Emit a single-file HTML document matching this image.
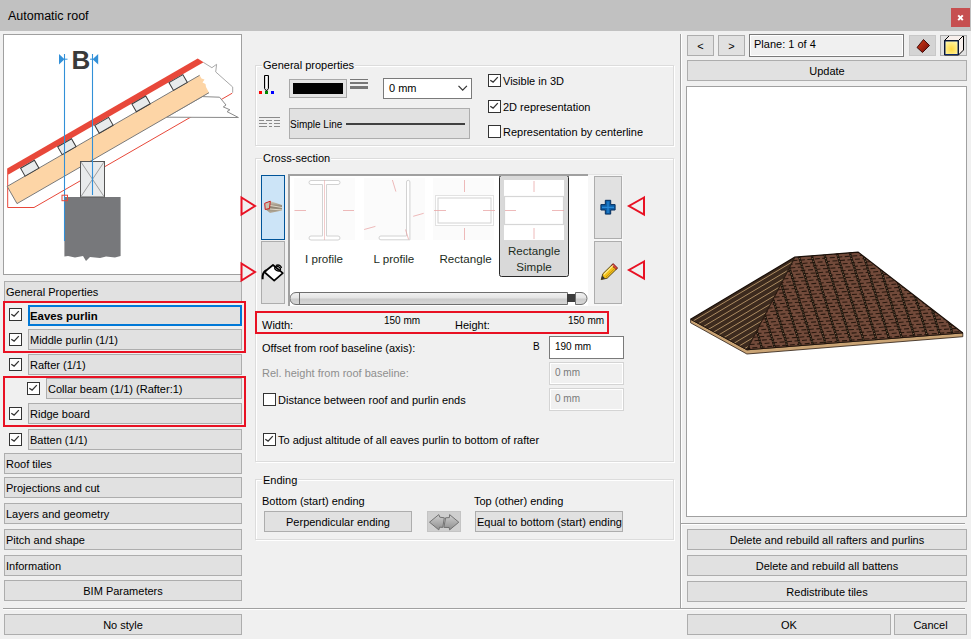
<!DOCTYPE html>
<html><head><meta charset="utf-8">
<style>
*{box-sizing:border-box;margin:0;padding:0}
html,body{width:971px;height:639px;overflow:hidden;background:#f0f0f0;font-family:"Liberation Sans",sans-serif;font-size:11px;color:#000;position:relative}
.a{position:absolute}
.btn{position:absolute;background:#e1e1e1;border:1px solid #adadad;white-space:nowrap;overflow:hidden}
.l{position:absolute;white-space:nowrap;line-height:14px}
.cb{position:absolute;width:13px;height:13px;border:1px solid #333;background:#fff}
.cb svg{position:absolute;left:0;top:0}
.gb{position:absolute;border:1px solid #dcdcdc;box-shadow:inset 1px 1px 0 #fff,1px 1px 0 #fff}
.gt{position:absolute;background:#f0f0f0;padding:0 1px;line-height:14px;white-space:nowrap}
.red{position:absolute;border:2px solid #e81123}
.ct{text-align:center}
.hl{position:absolute;height:1px;background:#a0a0a0}
</style></head><body>
<!-- title bar -->
<div class="a" style="left:0;top:0;width:971px;height:31px;background:#c1c1c1"></div>
<div class="l" style="left:8px;top:9px;font-size:12.5px">Automatic roof</div>
<div class="a" style="left:951px;top:8px;width:19px;height:19px;background:#c64f50"></div>
<svg class="a" style="left:951px;top:8px" width="19" height="19"><path d="M7.2 7.4L11.8 12.1M11.8 7.4L7.2 12.1" stroke="#fff" stroke-width="2"/></svg>

<!-- LEFT PANEL -->
<div class="a" style="left:3px;top:34px;width:239px;height:241px;background:#fff;border:1px solid #a0a0a0"></div>
<div id="preview"><svg class="a" style="left:4px;top:35px" width="237" height="239" viewBox="4 35 237 239">
<polyline points="7.7,175.0 7.7,207.5 34.0,207.5 232.2,93.2" fill="none" stroke="#e8483a" stroke-width="1"/>
<polygon points="166.5,117.2 202.4,96.6 219.5,97.2 226.0,105.0 223.3,106.9 229.9,109.8 227.0,111.6 238.4,117.5" fill="#fff" stroke="#8a8a8a" stroke-width="1"/>
<polyline points="203.4,62.4 211.9,67.7 216.6,64.3 215.7,71.9 232.7,87.0 232.7,92.7" fill="none" stroke="#a8a8a8" stroke-width="1"/>
<polygon points="7.2,168.6 197.7,58.6 203.6,62.3 7.2,175.2" fill="#e8483a"/>
<polygon points="7.2,186.4 199.6,75.3 201.5,78.5 204.5,79.5 202.5,82.5 205.5,84.0 206.0,87.0 209.0,92.7 17.0,203.6" fill="#fdd5a6"/>
<line x1="7.2" y1="186.4" x2="199.6" y2="75.3" stroke="#7a7a7a" stroke-width="1"/>
<line x1="17" y1="203.6" x2="209" y2="92.7" stroke="#7a7a7a" stroke-width="1"/>
<line x1="7.2" y1="186.4" x2="17" y2="203.6" stroke="#7a7a7a" stroke-width="1"/>
<g transform="translate(32.0,172.1) rotate(-30)"><rect x="-8" y="-9" width="16" height="9" fill="#e8ebec" stroke="#3c3c3c" stroke-width="1"/></g>
<g transform="translate(69.1,150.6) rotate(-30)"><rect x="-8" y="-9" width="16" height="9" fill="#e8ebec" stroke="#3c3c3c" stroke-width="1"/></g>
<g transform="translate(106.2,129.2) rotate(-30)"><rect x="-8" y="-9" width="16" height="9" fill="#e8ebec" stroke="#3c3c3c" stroke-width="1"/></g>
<g transform="translate(143.3,107.8) rotate(-30)"><rect x="-8" y="-9" width="16" height="9" fill="#e8ebec" stroke="#3c3c3c" stroke-width="1"/></g>
<g transform="translate(180.4,86.4) rotate(-30)"><rect x="-8" y="-9" width="16" height="9" fill="#e8ebec" stroke="#3c3c3c" stroke-width="1"/></g>
<polygon points="64.4,197.0 120.6,197.0 120.6,256.0 115.0,257.5 106.0,256.5 100.0,258.0 90.0,257.0 86.0,261.0 83.0,256.0 75.0,257.5 68.0,256.0 64.4,256.5" fill="#77787b"/>
<rect x="80.5" y="161.5" width="24" height="35.5" fill="#e9ebec" stroke="#555" stroke-width="1"/>
<path d="M81 162L104 196.5M104 162L81 196.5" stroke="#8a8a8a" stroke-width="0.8"/>
<line x1="64.5" y1="54" x2="64.5" y2="241" stroke="#3290d8" stroke-width="1.1"/>
<line x1="92.5" y1="54" x2="92.5" y2="195" stroke="#3290d8" stroke-width="1.1"/>
<polygon points="59,54 59,64.5 64.5,59.2" fill="#3290d8"/><line x1="64" y1="59.2" x2="67.5" y2="59.2" stroke="#3290d8" stroke-width="1"/>
<polygon points="98.2,54 98.2,64.5 92.6,59.2" fill="#3290d8"/><line x1="90" y1="59.2" x2="93" y2="59.2" stroke="#3290d8" stroke-width="1"/>
<text x="71.5" y="69" font-family="Liberation Sans" font-weight="bold" font-size="26" fill="#3a3a3a">B</text>
<rect x="62" y="195.2" width="5.5" height="5.5" fill="none" stroke="#e8483a" stroke-width="1"/>
</svg></div>

<div class="btn" style="left:4px;top:281px;width:238px;height:22px;border-bottom:none"></div>
<div class="l" style="left:6px;top:285px">General Properties</div>

<div class="btn" style="left:28px;top:305px;width:214px;height:21px;border:2px solid #0078d7"></div>
<div class="l" style="left:30px;top:309px;font-weight:bold;font-size:11.4px">Eaves purlin</div>
<div class="btn" style="left:28px;top:329px;width:214px;height:21px"></div>
<div class="l" style="left:30px;top:333px">Middle purlin (1/1)</div>
<div class="btn" style="left:28px;top:354px;width:214px;height:21px"></div>
<div class="l" style="left:30px;top:358px">Rafter (1/1)</div>
<div class="btn" style="left:46px;top:378px;width:196px;height:21px"></div>
<div class="l" style="left:48px;top:382px">Collar beam (1/1) (Rafter:1)</div>
<div class="btn" style="left:28px;top:403px;width:214px;height:21px"></div>
<div class="l" style="left:30px;top:407px">Ridge board</div>
<div class="btn" style="left:28px;top:429px;width:214px;height:21px"></div>
<div class="l" style="left:30px;top:433px">Batten (1/1)</div>

<div class="cb" style="left:9px;top:308px"><svg width="10" height="10"><path d="M1.3 5.2L4.1 7.1L8.8 2.1" fill="none" stroke="#333" stroke-width="1.3"/></svg></div>
<div class="cb" style="left:9px;top:333px"><svg width="10" height="10"><path d="M1.3 5.2L4.1 7.1L8.8 2.1" fill="none" stroke="#333" stroke-width="1.3"/></svg></div>
<div class="cb" style="left:9px;top:358px"><svg width="10" height="10"><path d="M1.3 5.2L4.1 7.1L8.8 2.1" fill="none" stroke="#333" stroke-width="1.3"/></svg></div>
<div class="cb" style="left:27px;top:382px"><svg width="10" height="10"><path d="M1.3 5.2L4.1 7.1L8.8 2.1" fill="none" stroke="#333" stroke-width="1.3"/></svg></div>
<div class="cb" style="left:9px;top:407px"><svg width="10" height="10"><path d="M1.3 5.2L4.1 7.1L8.8 2.1" fill="none" stroke="#333" stroke-width="1.3"/></svg></div>
<div class="cb" style="left:9px;top:433px"><svg width="10" height="10"><path d="M1.3 5.2L4.1 7.1L8.8 2.1" fill="none" stroke="#333" stroke-width="1.3"/></svg></div>
<div class="red" style="left:3px;top:301px;width:243px;height:52px"></div>
<div class="red" style="left:3px;top:376px;width:243px;height:51px"></div>

<div class="btn" style="left:4px;top:453px;width:238px;height:21px"></div>
<div class="l" style="left:6px;top:457px">Roof tiles</div>
<div class="btn" style="left:4px;top:477px;width:238px;height:21px"></div>
<div class="l" style="left:6px;top:481px">Projections and cut</div>
<div class="btn" style="left:4px;top:503px;width:238px;height:21px"></div>
<div class="l" style="left:6px;top:507px">Layers and geometry</div>
<div class="btn" style="left:4px;top:529px;width:238px;height:21px"></div>
<div class="l" style="left:6px;top:533px">Pitch and shape</div>
<div class="btn" style="left:4px;top:555px;width:238px;height:21px"></div>
<div class="l" style="left:6px;top:559px">Information</div>
<div class="btn ct" style="left:4px;top:580px;width:238px;height:21px;line-height:21px">BIM Parameters</div>

<div class="hl" style="left:3px;top:608px;width:962px"></div><div class="a" style="left:3px;top:609px;width:962px;height:1px;background:#fff"></div>
<div class="btn ct" style="left:4px;top:614px;width:238px;height:21px;line-height:21px">No style</div>

<!-- CENTER -->
<div class="gb" style="left:255px;top:65px;width:419px;height:81px"></div>
<div class="gt" style="left:262px;top:58px">General properties</div>

<div class="gb" style="left:255px;top:158px;width:419px;height:304px"></div>
<div class="gt" style="left:262px;top:151px">Cross-section</div>

<div class="gb" style="left:255px;top:479px;width:419px;height:61px"></div>
<div class="gt" style="left:262px;top:473px">Ending</div>


<!-- general properties content -->
<svg class="a" style="left:258px;top:74px" width="18" height="22">
 <path d="M6.5 1.5h4v13l-2 2.5l-2-2.5z" fill="#d8d8d8" stroke="#000" stroke-width="1"/>
 <path d="M8.5 2v12" stroke="#fff" stroke-width="1"/>
 <rect x="1" y="17" width="3" height="3" fill="#f00"/>
 <rect x="7" y="17" width="3" height="3" fill="#080"/>
 <rect x="13" y="17" width="3" height="3" fill="#00f"/>
</svg>
<div class="a" style="left:289px;top:79px;width:58px;height:19px;border:1px solid #a8a8a8;background:#e3e3e3"></div>
<div class="a" style="left:293px;top:83px;width:50px;height:11px;background:#000"></div>
<svg class="a" style="left:350px;top:78px" width="19" height="12">
 <rect x="0" y="1" width="18" height="1" fill="#777"/>
 <rect x="0" y="4" width="18" height="2" fill="#777"/>
 <rect x="0" y="8" width="18" height="3" fill="#777"/>
</svg>
<div class="a" style="left:383px;top:78px;width:89px;height:21px;border:1px solid #7a7a7a;background:#fff"></div>
<div class="l" style="left:389px;top:81px">0 mm</div>
<svg class="a" style="left:458px;top:85px" width="10" height="7"><path d="M0.5 0.8L4.7 5.2L8.9 0.8" fill="none" stroke="#333" stroke-width="1.2"/></svg>

<svg class="a" style="left:258px;top:116px" width="23" height="12">
 <rect x="1" y="1" width="21" height="1" fill="#8a8a8a"/>
 <rect x="1" y="4" width="5" height="1" fill="#8a8a8a"/><rect x="8" y="4" width="6" height="1" fill="#8a8a8a"/><rect x="16" y="4" width="6" height="1" fill="#8a8a8a"/>
 <rect x="1" y="7" width="8" height="1" fill="#8a8a8a"/><rect x="11" y="7" width="3" height="1" fill="#8a8a8a"/><rect x="16" y="7" width="6" height="1" fill="#8a8a8a"/>
 <rect x="1" y="10" width="8" height="1" fill="#8a8a8a"/><rect x="11" y="10" width="3" height="1" fill="#8a8a8a"/><rect x="16" y="10" width="6" height="1" fill="#8a8a8a"/>
</svg>
<div class="btn" style="left:289px;top:108px;width:181px;height:31px"></div>
<div class="l" style="left:290px;top:118px;font-size:10px">Simple Line</div>
<div class="a" style="left:346px;top:123px;width:119px;height:2px;background:#404040"></div>

<div class="cb" style="left:488px;top:74px"><svg width="10" height="10"><path d="M1.3 5.2L4.1 7.1L8.8 2.1" fill="none" stroke="#333" stroke-width="1.3"/></svg></div>
<div class="l" style="left:503px;top:74px">Visible in 3D</div>
<div class="cb" style="left:488px;top:100px"><svg width="10" height="10"><path d="M1.3 5.2L4.1 7.1L8.8 2.1" fill="none" stroke="#333" stroke-width="1.3"/></svg></div>
<div class="l" style="left:503px;top:100px">2D representation</div>
<div class="cb" style="left:488px;top:125px"></div>
<div class="l" style="left:503px;top:125px">Representation by centerline</div>

<!-- cross-section content -->
<div class="a" style="left:261px;top:175px;width:24px;height:65px;background:#cce4f7;border:1px solid #005499"></div>
<div class="btn" style="left:261px;top:241px;width:24px;height:63px"></div>
<div class="a" style="left:288px;top:174px;width:300px;height:132px;background:#fff;border-top:2px solid #a0a0a0;border-left:2px solid #a0a0a0"></div>
<div class="a" style="left:588px;top:174px;width:35px;height:132px;background:#f7f7f7;border-top:1px solid #e3e3e3"></div>
<div id="gallery"><svg class="a" style="left:290px;top:176px" width="298" height="130" viewBox="290 176 298 130">
<rect x="294" y="178" width="61" height="62" fill="#fbfbfb"/>
<rect x="364" y="178" width="61" height="62" fill="#fbfbfb"/>
<rect x="433" y="178" width="61" height="62" fill="#fbfbfb"/>
<path d="M311 180.5h27a2 2 0 0 1 0 4h-11.5v51.5h11.5a2 2 0 0 1 0 4h-27a2 2 0 0 1 0-4h11.5v-51.5h-11.5a2 2 0 0 1 0-4z" fill="#fff" stroke="#d2d2d2" stroke-width="1"/>
<line x1="324.5" y1="180" x2="324.5" y2="240" stroke="#eaa8a8" stroke-width="0.6"/>
<line x1="294.5" y1="210.5" x2="306" y2="210.5" stroke="#eaa8a8" stroke-width="0.8"/>
<line x1="343" y1="210.5" x2="354" y2="210.5" stroke="#eaa8a8" stroke-width="0.8"/>
<path d="M406.5 182a1.7 1.7 0 0 1 3.4 0v57.8h-29a1.9 1.9 0 0 1 0-3.8h25.6z" fill="#fff" stroke="#d2d2d2" stroke-width="1"/>
<line x1="392.4" y1="180" x2="395.9" y2="191.6" stroke="#eaa8a8" stroke-width="0.8"/>
<line x1="364.1" y1="229.5" x2="375.4" y2="226.4" stroke="#eaa8a8" stroke-width="0.8"/>
<line x1="413.2" y1="216.3" x2="423.7" y2="213.3" stroke="#eaa8a8" stroke-width="0.8"/>
<line x1="405.5" y1="229.5" x2="408.6" y2="239.5" stroke="#eaa8a8" stroke-width="0.8"/>
<rect x="435.5" y="195.5" width="58" height="30" fill="#fff" stroke="#e2e2e2" stroke-width="1"/>
<rect x="438" y="198" width="53" height="25" fill="#fff" stroke="#d2d2d2" stroke-width="1"/>
<line x1="464.5" y1="180" x2="464.5" y2="192" stroke="#eaa8a8" stroke-width="0.8"/>
<line x1="464.5" y1="228" x2="464.5" y2="240" stroke="#eaa8a8" stroke-width="0.8"/>
<line x1="434" y1="210.5" x2="446" y2="210.5" stroke="#eaa8a8" stroke-width="0.8"/>
<line x1="483" y1="210.5" x2="495" y2="210.5" stroke="#eaa8a8" stroke-width="0.8"/>
<rect x="499.5" y="175.5" width="69" height="101" rx="2" fill="#d9d9d9" stroke="#2a2a2a" stroke-width="1"/>
<rect x="504" y="180" width="60" height="60" fill="#fff"/>
<rect x="504.5" y="196.5" width="59" height="28" fill="#fff" stroke="#d6d6d6" stroke-width="1.2"/>
<line x1="534" y1="181" x2="534" y2="192" stroke="#eaa8a8" stroke-width="0.8"/>
<line x1="534" y1="228" x2="534" y2="239" stroke="#eaa8a8" stroke-width="0.8"/>
<line x1="505" y1="210.5" x2="516" y2="210.5" stroke="#eaa8a8" stroke-width="0.8"/>
<line x1="552" y1="210.5" x2="564" y2="210.5" stroke="#eaa8a8" stroke-width="0.8"/>
<text x="305" y="262.5" font-family="Liberation Sans" font-size="11.6" fill="#1c2c1c">I profile</text>
<text x="373.5" y="262.5" font-family="Liberation Sans" font-size="11.6" fill="#1c2c1c">L profile</text>
<text x="439.5" y="262.5" font-family="Liberation Sans" font-size="11.6" fill="#1c2c1c">Rectangle</text>
<text x="534" y="254.5" text-anchor="middle" font-family="Liberation Sans" font-size="11.6" fill="#1c2c1c">Rectangle</text>
<text x="534" y="270.7" text-anchor="middle" font-family="Liberation Sans" font-size="11.6" fill="#1c2c1c">Simple</text>
<defs><linearGradient id="sg" x1="0" y1="0" x2="0" y2="1"><stop offset="0" stop-color="#f2f2f2"/><stop offset="0.45" stop-color="#e4e4e4"/><stop offset="0.55" stop-color="#cbcbcb"/><stop offset="1" stop-color="#d8d8d8"/></linearGradient></defs>
<path d="M296 292.5H567.5V304.5H296a6 6 0 0 1 0-12z" fill="url(#sg)" stroke="#6e6e6e" stroke-width="1"/>
<line x1="299.5" y1="293" x2="299.5" y2="304" stroke="#6e6e6e" stroke-width="1"/>
<rect x="567" y="294" width="8.5" height="8" fill="#3c3c3c"/>
<path d="M575.5 292.5H581a6 6 0 0 1 0 12H575.5z" fill="url(#sg)" stroke="#6e6e6e" stroke-width="1"/>
</svg></div><!--end-gallery-->
<div class="btn" style="left:594px;top:176px;width:28px;height:63px"></div>
<div class="btn" style="left:594px;top:241px;width:28px;height:63px"></div>
<div id="icons"><svg class="a" style="left:262px;top:198px" width="22" height="17" viewBox="262 198 22 17">
<defs><linearGradient id="bm" x1="0" y1="0" x2="0" y2="1"><stop offset="0" stop-color="#d8d0c0"/><stop offset="0.5" stop-color="#8a8070"/><stop offset="1" stop-color="#b8ae9c"/></linearGradient></defs>
<path d="M265 203.5L270 201L282 205L282 210.5L270 213L265 209z" fill="url(#bm)"/>
<path d="M270 205.5L282 207.5M270 209L282 210" stroke="#e8e0d0" stroke-width="0.9"/>
<path d="M264.7 203.3L270.3 201.2L269.5 208.5L265.2 209.5z" fill="#c8c0b0" stroke="#d02020" stroke-width="1"/>
</svg>
<svg class="a" style="left:261px;top:261px" width="24" height="24" viewBox="261 261 24 24">
<path d="M264.3 272L273 265L282.8 273.2L274.2 280.6z" fill="#fff" stroke="#000" stroke-width="1.7" stroke-linejoin="round"/>
<path d="M266.5 270.2Q262.2 272 262.6 279.2" fill="none" stroke="#000" stroke-width="2"/>
<ellipse cx="277.6" cy="268.6" rx="3" ry="2.1" fill="none" stroke="#000" stroke-width="1.3" transform="rotate(30 277.6 268.6)"/>
<path d="M276 265.3Q280.5 264 281.5 268" fill="none" stroke="#000" stroke-width="1.3"/>
</svg>
<svg class="a" style="left:600px;top:199px" width="17" height="16" viewBox="600 199 17 16">
<path d="M605.3 200.3h5.4v4.3h4.4v5.4h-4.4v4.1h-5.4v-4.1h-4.4v-5.4h4.4z" fill="#0d5fa8" stroke="#062f5e" stroke-width="1"/>
<path d="M608 201.5v11.5M602 207.3h12" stroke="#2a8ad8" stroke-width="1.2"/>
</svg>
<svg class="a" style="left:600px;top:262px" width="19" height="19" viewBox="600 262 19 19">
<path d="M601.2 279.6L602.8 273.8L612.6 264.2L617 268.6L607.2 278.2z" fill="#f3c21a" stroke="#4a3a12" stroke-width="0.9" stroke-linejoin="round"/>
<path d="M611.6 265.2L616 269.6L617.6 268L613.2 263.6z" fill="#e0403a" stroke="#6a1a1a" stroke-width="0.8"/>
<path d="M601.2 279.6L602.3 275.6L605.2 278.5z" fill="#333"/>
<path d="M603.8 274.6L613.2 265.4" stroke="#fff09a" stroke-width="1.1"/>
<path d="M606 277L615.4 267.8" stroke="#c89010" stroke-width="1"/>
</svg>
<svg class="a" style="left:238px;top:194px" width="20" height="92" viewBox="238 194 20 92">
<path d="M241.5 197.5L255 206L241.5 214.5z" fill="none" stroke="#e81123" stroke-width="2"/>
<path d="M241.5 263.5L255 272L241.5 280.5z" fill="none" stroke="#e81123" stroke-width="2"/>
</svg>
<svg class="a" style="left:625px;top:194px" width="22" height="92" viewBox="625 194 22 92">
<path d="M644 197.5L629 206L644 214.5z" fill="none" stroke="#e81123" stroke-width="2"/>
<path d="M644 261.5L629 270L644 278.5z" fill="none" stroke="#e81123" stroke-width="2"/>
</svg></div><!--end-icons-->

<div class="red" style="left:255px;top:311px;width:354px;height:23px"></div>
<div class="l" style="left:262px;top:318px">Width:</div>
<div class="l" style="left:384px;top:314px;font-size:10px">150 mm</div>
<div class="l" style="left:455px;top:318px">Height:</div>
<div class="l" style="left:568px;top:314px;font-size:10px">150 mm</div>

<div class="l" style="left:262px;top:341px">Offset from roof baseline (axis):</div>
<div class="l" style="left:533px;top:340px;font-size:10px">B</div>
<div class="a" style="left:549px;top:336px;width:75px;height:23px;border:1px solid #7a7a7a;background:#fff"></div>
<div class="l" style="left:555px;top:340px;font-size:10px">190 mm</div>
<div class="l" style="left:262px;top:366px;color:#8e8e8e">Rel. height from roof baseline:</div>
<div class="a" style="left:549px;top:362px;width:75px;height:23px;border:1px solid #d4d4d4;background:#f0f0f0;box-shadow:inset 1px 1px 0 #fff,inset -1px -1px 0 #fff"></div>
<div class="l" style="left:555px;top:366px;color:#7a7a7a;font-size:10px">0 mm</div>
<div class="cb" style="left:263px;top:393px"></div>
<div class="l" style="left:278px;top:393px">Distance between roof and purlin ends</div>
<div class="a" style="left:549px;top:388px;width:75px;height:23px;border:1px solid #d4d4d4;background:#f0f0f0;box-shadow:inset 1px 1px 0 #fff,inset -1px -1px 0 #fff"></div>
<div class="l" style="left:555px;top:392px;color:#7a7a7a;font-size:10px">0 mm</div>
<div class="cb" style="left:263px;top:433px"><svg width="10" height="10"><path d="M1.3 5.2L4.1 7.1L8.8 2.1" fill="none" stroke="#333" stroke-width="1.3"/></svg></div>
<div class="l" style="left:278px;top:433px">To adjust altitude of all eaves purlin to bottom of rafter</div>

<!-- ending -->
<div class="l" style="left:262px;top:494px">Bottom (start) ending</div>
<div class="l" style="left:474px;top:494px">Top (other) ending</div>
<div class="btn ct" style="left:264px;top:511px;width:148px;height:21px;line-height:21px">Perpendicular ending</div>
<div class="btn" style="left:427px;top:511px;width:34px;height:21px;background:#cfcfcf;border-color:#c4c4c4"></div>
<svg class="a" style="left:427px;top:511px" width="34" height="21">
 <defs><linearGradient id="ag" x1="0" y1="0" x2="0" y2="1"><stop offset="0" stop-color="#d0d0d0"/><stop offset="1" stop-color="#8e8e8e"/></linearGradient></defs>
 <path d="M2.5 11.2L11.8 3.6L12.8 6.2L17.3 6.8L15.8 16.4L12.6 16.2L11.8 18.9z" fill="url(#ag)" stroke="#727272" stroke-width="1" stroke-linejoin="round"/>
 <path d="M31.8 11.2L22.6 3.6L22.4 6.6L18.6 6.8L16.9 16.4L22.2 16.5L22.6 18.9z" fill="url(#ag)" stroke="#727272" stroke-width="1" stroke-linejoin="round"/>
</svg>
<div class="btn" style="left:475px;top:511px;width:148px;height:21px;line-height:21px;padding-left:1px">Equal to bottom (start) ending</div>

<!-- RIGHT -->
<div class="a" style="left:680px;top:34px;width:1px;height:575px;background:#a0a0a0"></div><div class="a" style="left:681px;top:34px;width:1px;height:574px;background:#fff"></div>
<div class="btn ct" style="left:687px;top:35px;width:27px;height:21px;line-height:21px">&lt;</div>
<div class="btn ct" style="left:718px;top:35px;width:27px;height:21px;line-height:21px">&gt;</div>
<div class="a" style="left:749px;top:34px;width:155px;height:23px;border:1px solid #7a7a7a;background:#f0f0f0;box-shadow:inset 1px 1px 0 #fff,inset -1px -1px 0 #fff"></div>
<div class="l" style="left:754px;top:37px">Plane: 1 of 4</div>
<div class="btn" style="left:909px;top:35px;width:27px;height:21px;background:#d4d4d4;border-color:#c8c8c8"></div>
<div class="btn" style="left:940px;top:35px;width:27px;height:21px"></div>
<div id="ticons"><svg class="a" style="left:912px;top:36px" width="52" height="21" viewBox="912 36 52 21">
<defs><linearGradient id="dg" x1="0" y1="0" x2="1" y2="1"><stop offset="0" stop-color="#d84018"/><stop offset="1" stop-color="#700808"/></linearGradient>
<radialGradient id="yg" cx="0.5" cy="0.6" r="0.6"><stop offset="0" stop-color="#ffd840"/><stop offset="1" stop-color="#fff4a0"/></radialGradient></defs>
<path d="M923.5 39.5L929.5 45.5L922.5 52.5L917 47.5z" fill="url(#dg)" stroke="#300" stroke-width="0.9" stroke-linejoin="round"/>
<path d="M944.5 40.5L949.5 35.5H963.5V50L958.5 55H944.5z" fill="#f8f0ec" stroke="#000" stroke-width="1"/>
<path d="M944.5 40.5H958.5L963.5 35.5M958.5 40.5V55" fill="none" stroke="#000" stroke-width="1"/>
<rect x="945" y="41" width="13" height="13.5" fill="url(#yg)" stroke="#102a6a" stroke-width="1"/>
</svg></div><!--end-ticons-->
<div class="btn ct" style="left:687px;top:60px;width:280px;height:21px;line-height:21px">Update</div>
<div class="a" style="left:686px;top:86px;width:281px;height:431px;background:#fff;border:1px solid #a0a0a0"></div>
<div id="roof"><svg class="a" style="left:687px;top:87px" width="279" height="429" viewBox="687 87 279 429">
<defs>
<clipPath id="cf"><polygon points="746.9,349.8 794.8,257.2 858.1,252.1 962.8,332.9"/></clipPath>
<clipPath id="cl"><polygon points="690.6,319.3 794.8,257.2 746.9,349.8"/></clipPath>
</defs>
<polygon points="690.6,319.3 746.9,349.8 962.8,332.9 962.8,336.7 746.9,354.0 690.6,322.8" fill="#c9a374" stroke="#2a1a10" stroke-width="0.8"/>
<polygon points="746.9,349.8 794.8,257.2 858.1,252.1 962.8,332.9" fill="#724a3a"/>
<g clip-path="url(#cf)">
<line x1="700" y1="351.97" x2="970" y2="330.84" stroke="#26170e" stroke-width="1.05" stroke-dasharray="5 2.5" stroke-dashoffset="0.0"/>
<line x1="700" y1="348.47" x2="970" y2="327.34" stroke="#26170e" stroke-width="1.05" stroke-dasharray="5 2.5" stroke-dashoffset="2.7"/>
<line x1="700" y1="344.97" x2="970" y2="323.84" stroke="#26170e" stroke-width="1.05" stroke-dasharray="5 2.5" stroke-dashoffset="5.4"/>
<line x1="700" y1="341.47" x2="970" y2="320.34" stroke="#26170e" stroke-width="1.05" stroke-dasharray="5 2.5" stroke-dashoffset="0.6"/>
<line x1="700" y1="337.97" x2="970" y2="316.84" stroke="#26170e" stroke-width="1.05" stroke-dasharray="5 2.5" stroke-dashoffset="3.3"/>
<line x1="700" y1="334.47" x2="970" y2="313.34" stroke="#26170e" stroke-width="1.05" stroke-dasharray="5 2.5" stroke-dashoffset="6.0"/>
<line x1="700" y1="330.97" x2="970" y2="309.84" stroke="#26170e" stroke-width="1.05" stroke-dasharray="5 2.5" stroke-dashoffset="1.2"/>
<line x1="700" y1="327.47" x2="970" y2="306.34" stroke="#26170e" stroke-width="1.05" stroke-dasharray="5 2.5" stroke-dashoffset="3.9"/>
<line x1="700" y1="323.97" x2="970" y2="302.84" stroke="#26170e" stroke-width="1.05" stroke-dasharray="5 2.5" stroke-dashoffset="6.6"/>
<line x1="700" y1="320.47" x2="970" y2="299.34" stroke="#26170e" stroke-width="1.05" stroke-dasharray="5 2.5" stroke-dashoffset="1.8"/>
<line x1="700" y1="316.97" x2="970" y2="295.84" stroke="#26170e" stroke-width="1.05" stroke-dasharray="5 2.5" stroke-dashoffset="4.5"/>
<line x1="700" y1="313.47" x2="970" y2="292.34" stroke="#26170e" stroke-width="1.05" stroke-dasharray="5 2.5" stroke-dashoffset="7.2"/>
<line x1="700" y1="309.97" x2="970" y2="288.84" stroke="#26170e" stroke-width="1.05" stroke-dasharray="5 2.5" stroke-dashoffset="2.4"/>
<line x1="700" y1="306.47" x2="970" y2="285.34" stroke="#26170e" stroke-width="1.05" stroke-dasharray="5 2.5" stroke-dashoffset="5.1"/>
<line x1="700" y1="302.97" x2="970" y2="281.84" stroke="#26170e" stroke-width="1.05" stroke-dasharray="5 2.5" stroke-dashoffset="0.3"/>
<line x1="700" y1="299.47" x2="970" y2="278.34" stroke="#26170e" stroke-width="1.05" stroke-dasharray="5 2.5" stroke-dashoffset="3.0"/>
<line x1="700" y1="295.97" x2="970" y2="274.84" stroke="#26170e" stroke-width="1.05" stroke-dasharray="5 2.5" stroke-dashoffset="5.7"/>
<line x1="700" y1="292.47" x2="970" y2="271.34" stroke="#26170e" stroke-width="1.05" stroke-dasharray="5 2.5" stroke-dashoffset="0.9"/>
<line x1="700" y1="288.97" x2="970" y2="267.84" stroke="#26170e" stroke-width="1.05" stroke-dasharray="5 2.5" stroke-dashoffset="3.6"/>
<line x1="700" y1="285.47" x2="970" y2="264.34" stroke="#26170e" stroke-width="1.05" stroke-dasharray="5 2.5" stroke-dashoffset="6.3"/>
<line x1="700" y1="281.97" x2="970" y2="260.84" stroke="#26170e" stroke-width="1.05" stroke-dasharray="5 2.5" stroke-dashoffset="1.5"/>
<line x1="700" y1="278.47" x2="970" y2="257.34" stroke="#26170e" stroke-width="1.05" stroke-dasharray="5 2.5" stroke-dashoffset="4.2"/>
<line x1="700" y1="274.97" x2="970" y2="253.84" stroke="#26170e" stroke-width="1.05" stroke-dasharray="5 2.5" stroke-dashoffset="6.9"/>
<line x1="700" y1="271.47" x2="970" y2="250.34" stroke="#26170e" stroke-width="1.05" stroke-dasharray="5 2.5" stroke-dashoffset="2.1"/>
<line x1="700" y1="267.97" x2="970" y2="246.84" stroke="#26170e" stroke-width="1.05" stroke-dasharray="5 2.5" stroke-dashoffset="4.8"/>
<line x1="700" y1="264.47" x2="970" y2="243.34" stroke="#26170e" stroke-width="1.05" stroke-dasharray="5 2.5" stroke-dashoffset="0.0"/>
<line x1="700" y1="260.97" x2="970" y2="239.84" stroke="#26170e" stroke-width="1.05" stroke-dasharray="5 2.5" stroke-dashoffset="2.7"/>
<line x1="700" y1="257.47" x2="970" y2="236.34" stroke="#26170e" stroke-width="1.05" stroke-dasharray="5 2.5" stroke-dashoffset="5.4"/>
<line x1="700" y1="253.97" x2="970" y2="232.84" stroke="#26170e" stroke-width="1.05" stroke-dasharray="5 2.5" stroke-dashoffset="0.6"/>
<line x1="700" y1="250.47" x2="970" y2="229.34" stroke="#26170e" stroke-width="1.05" stroke-dasharray="5 2.5" stroke-dashoffset="3.3"/>
<line x1="700" y1="246.97" x2="970" y2="225.84" stroke="#26170e" stroke-width="1.05" stroke-dasharray="5 2.5" stroke-dashoffset="6.0"/>
<line x1="654.0" y1="250" x2="686.1" y2="355" stroke="#1c120b" stroke-width="2.2"/>
<line x1="654.0" y1="250" x2="686.1" y2="355" stroke="#8a7a5c" stroke-width="0.8" stroke-dasharray="1.2 1.6"/>
<line x1="667.0" y1="250" x2="699.1" y2="355" stroke="#1c120b" stroke-width="2.2"/>
<line x1="667.0" y1="250" x2="699.1" y2="355" stroke="#8a7a5c" stroke-width="0.8" stroke-dasharray="1.2 1.6"/>
<line x1="680.0" y1="250" x2="712.1" y2="355" stroke="#1c120b" stroke-width="2.2"/>
<line x1="680.0" y1="250" x2="712.1" y2="355" stroke="#8a7a5c" stroke-width="0.8" stroke-dasharray="1.2 1.6"/>
<line x1="693.0" y1="250" x2="725.1" y2="355" stroke="#1c120b" stroke-width="2.2"/>
<line x1="693.0" y1="250" x2="725.1" y2="355" stroke="#8a7a5c" stroke-width="0.8" stroke-dasharray="1.2 1.6"/>
<line x1="706.0" y1="250" x2="738.1" y2="355" stroke="#1c120b" stroke-width="2.2"/>
<line x1="706.0" y1="250" x2="738.1" y2="355" stroke="#8a7a5c" stroke-width="0.8" stroke-dasharray="1.2 1.6"/>
<line x1="719.0" y1="250" x2="751.1" y2="355" stroke="#1c120b" stroke-width="2.2"/>
<line x1="719.0" y1="250" x2="751.1" y2="355" stroke="#8a7a5c" stroke-width="0.8" stroke-dasharray="1.2 1.6"/>
<line x1="732.0" y1="250" x2="764.1" y2="355" stroke="#1c120b" stroke-width="2.2"/>
<line x1="732.0" y1="250" x2="764.1" y2="355" stroke="#8a7a5c" stroke-width="0.8" stroke-dasharray="1.2 1.6"/>
<line x1="745.0" y1="250" x2="777.1" y2="355" stroke="#1c120b" stroke-width="2.2"/>
<line x1="745.0" y1="250" x2="777.1" y2="355" stroke="#8a7a5c" stroke-width="0.8" stroke-dasharray="1.2 1.6"/>
<line x1="758.0" y1="250" x2="790.1" y2="355" stroke="#1c120b" stroke-width="2.2"/>
<line x1="758.0" y1="250" x2="790.1" y2="355" stroke="#8a7a5c" stroke-width="0.8" stroke-dasharray="1.2 1.6"/>
<line x1="771.0" y1="250" x2="803.1" y2="355" stroke="#1c120b" stroke-width="2.2"/>
<line x1="771.0" y1="250" x2="803.1" y2="355" stroke="#8a7a5c" stroke-width="0.8" stroke-dasharray="1.2 1.6"/>
<line x1="784.0" y1="250" x2="816.1" y2="355" stroke="#1c120b" stroke-width="2.2"/>
<line x1="784.0" y1="250" x2="816.1" y2="355" stroke="#8a7a5c" stroke-width="0.8" stroke-dasharray="1.2 1.6"/>
<line x1="797.0" y1="250" x2="829.1" y2="355" stroke="#1c120b" stroke-width="2.2"/>
<line x1="797.0" y1="250" x2="829.1" y2="355" stroke="#8a7a5c" stroke-width="0.8" stroke-dasharray="1.2 1.6"/>
<line x1="810.0" y1="250" x2="842.1" y2="355" stroke="#1c120b" stroke-width="2.2"/>
<line x1="810.0" y1="250" x2="842.1" y2="355" stroke="#8a7a5c" stroke-width="0.8" stroke-dasharray="1.2 1.6"/>
<line x1="823.0" y1="250" x2="855.1" y2="355" stroke="#1c120b" stroke-width="2.2"/>
<line x1="823.0" y1="250" x2="855.1" y2="355" stroke="#8a7a5c" stroke-width="0.8" stroke-dasharray="1.2 1.6"/>
<line x1="836.0" y1="250" x2="868.1" y2="355" stroke="#1c120b" stroke-width="2.2"/>
<line x1="836.0" y1="250" x2="868.1" y2="355" stroke="#8a7a5c" stroke-width="0.8" stroke-dasharray="1.2 1.6"/>
<line x1="849.0" y1="250" x2="881.1" y2="355" stroke="#1c120b" stroke-width="2.2"/>
<line x1="849.0" y1="250" x2="881.1" y2="355" stroke="#8a7a5c" stroke-width="0.8" stroke-dasharray="1.2 1.6"/>
<line x1="862.0" y1="250" x2="894.1" y2="355" stroke="#1c120b" stroke-width="2.2"/>
<line x1="862.0" y1="250" x2="894.1" y2="355" stroke="#8a7a5c" stroke-width="0.8" stroke-dasharray="1.2 1.6"/>
<line x1="875.0" y1="250" x2="907.1" y2="355" stroke="#1c120b" stroke-width="2.2"/>
<line x1="875.0" y1="250" x2="907.1" y2="355" stroke="#8a7a5c" stroke-width="0.8" stroke-dasharray="1.2 1.6"/>
<line x1="888.0" y1="250" x2="920.1" y2="355" stroke="#1c120b" stroke-width="2.2"/>
<line x1="888.0" y1="250" x2="920.1" y2="355" stroke="#8a7a5c" stroke-width="0.8" stroke-dasharray="1.2 1.6"/>
<line x1="901.0" y1="250" x2="933.1" y2="355" stroke="#1c120b" stroke-width="2.2"/>
<line x1="901.0" y1="250" x2="933.1" y2="355" stroke="#8a7a5c" stroke-width="0.8" stroke-dasharray="1.2 1.6"/>
<line x1="914.0" y1="250" x2="946.1" y2="355" stroke="#1c120b" stroke-width="2.2"/>
<line x1="914.0" y1="250" x2="946.1" y2="355" stroke="#8a7a5c" stroke-width="0.8" stroke-dasharray="1.2 1.6"/>
<line x1="927.0" y1="250" x2="959.1" y2="355" stroke="#1c120b" stroke-width="2.2"/>
<line x1="927.0" y1="250" x2="959.1" y2="355" stroke="#8a7a5c" stroke-width="0.8" stroke-dasharray="1.2 1.6"/>
<line x1="940.0" y1="250" x2="972.1" y2="355" stroke="#1c120b" stroke-width="2.2"/>
<line x1="940.0" y1="250" x2="972.1" y2="355" stroke="#8a7a5c" stroke-width="0.8" stroke-dasharray="1.2 1.6"/>
<line x1="953.0" y1="250" x2="985.1" y2="355" stroke="#1c120b" stroke-width="2.2"/>
<line x1="953.0" y1="250" x2="985.1" y2="355" stroke="#8a7a5c" stroke-width="0.8" stroke-dasharray="1.2 1.6"/>
<line x1="966.0" y1="250" x2="998.1" y2="355" stroke="#1c120b" stroke-width="2.2"/>
<line x1="966.0" y1="250" x2="998.1" y2="355" stroke="#8a7a5c" stroke-width="0.8" stroke-dasharray="1.2 1.6"/>
<line x1="979.0" y1="250" x2="1011.1" y2="355" stroke="#1c120b" stroke-width="2.2"/>
<line x1="979.0" y1="250" x2="1011.1" y2="355" stroke="#8a7a5c" stroke-width="0.8" stroke-dasharray="1.2 1.6"/>
<line x1="992.0" y1="250" x2="1024.1" y2="355" stroke="#1c120b" stroke-width="2.2"/>
<line x1="992.0" y1="250" x2="1024.1" y2="355" stroke="#8a7a5c" stroke-width="0.8" stroke-dasharray="1.2 1.6"/>
<line x1="1005.0" y1="250" x2="1037.1" y2="355" stroke="#1c120b" stroke-width="2.2"/>
<line x1="1005.0" y1="250" x2="1037.1" y2="355" stroke="#8a7a5c" stroke-width="0.8" stroke-dasharray="1.2 1.6"/>
</g>
<polygon points="690.6,319.3 794.8,257.2 746.9,349.8" fill="#3c2a1e"/>
<g clip-path="url(#cl)">
<line x1="674.9" y1="331.9" x2="812.3" y2="250.0" stroke="#b8966a" stroke-width="0.9"/>
<line x1="677.4" y1="336.2" x2="814.9" y2="254.3" stroke="#b8966a" stroke-width="0.9"/>
<line x1="680.0" y1="340.5" x2="817.4" y2="258.6" stroke="#b8966a" stroke-width="0.9"/>
<line x1="682.5" y1="344.8" x2="820.0" y2="262.9" stroke="#b8966a" stroke-width="0.9"/>
<line x1="685.1" y1="349.1" x2="822.5" y2="267.2" stroke="#b8966a" stroke-width="0.9"/>
<line x1="687.7" y1="353.4" x2="825.1" y2="271.5" stroke="#b8966a" stroke-width="0.9"/>
<line x1="690.2" y1="357.7" x2="827.7" y2="275.8" stroke="#b8966a" stroke-width="0.9"/>
<line x1="692.8" y1="362.0" x2="830.2" y2="280.1" stroke="#b8966a" stroke-width="0.9"/>
<line x1="695.3" y1="366.3" x2="832.8" y2="284.4" stroke="#b8966a" stroke-width="0.9"/>
<line x1="697.9" y1="370.6" x2="835.3" y2="288.7" stroke="#b8966a" stroke-width="0.9"/>
<line x1="700.5" y1="374.9" x2="837.9" y2="293.0" stroke="#b8966a" stroke-width="0.9"/>
<line x1="703.0" y1="379.2" x2="840.5" y2="297.3" stroke="#b8966a" stroke-width="0.9"/>
<line x1="705.6" y1="383.5" x2="843.0" y2="301.6" stroke="#b8966a" stroke-width="0.9"/>
<line x1="708.1" y1="387.8" x2="845.6" y2="305.9" stroke="#b8966a" stroke-width="0.9"/>
<line x1="710.7" y1="392.1" x2="848.1" y2="310.2" stroke="#b8966a" stroke-width="0.9"/>
<line x1="713.2" y1="396.4" x2="850.7" y2="314.5" stroke="#b8966a" stroke-width="0.9"/>
</g>
<polyline points="690.6,319.3 794.8,257.2 858.1,252.1 962.8,332.9" fill="none" stroke="#1a0f08" stroke-width="1.2"/>
<line x1="794.8" y1="257.2" x2="746.9" y2="349.8" stroke="#2a1a10" stroke-width="1.2"/>
<polyline points="690.6,319.3 746.9,349.8 962.8,332.9" fill="none" stroke="#1a0f08" stroke-width="0.9"/>
</svg></div><!--end-roof-->
<div class="hl" style="left:681px;top:523px;width:284px"></div><div class="a" style="left:682px;top:524px;width:283px;height:1px;background:#fff"></div>
<div class="btn ct" style="left:687px;top:529px;width:280px;height:21px;line-height:21px">Delete and rebuild all rafters and purlins</div>
<div class="btn ct" style="left:687px;top:555px;width:280px;height:21px;line-height:21px">Delete and rebuild all battens</div>
<div class="btn ct" style="left:687px;top:581px;width:280px;height:21px;line-height:21px">Redistribute tiles</div>
<div class="btn ct" style="left:687px;top:614px;width:204px;height:21px;line-height:21px">OK</div>
<div class="btn ct" style="left:894px;top:614px;width:73px;height:21px;line-height:21px">Cancel</div>
</body></html>
